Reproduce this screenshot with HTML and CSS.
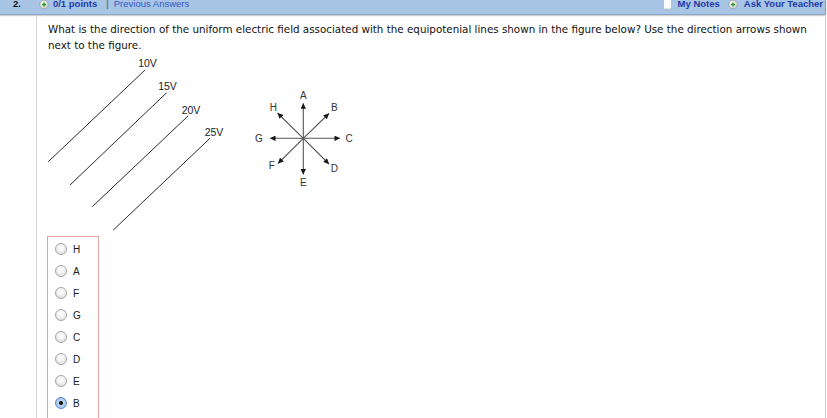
FILE: index.html
```html
<!DOCTYPE html>
<html>
<head>
<meta charset="utf-8">
<link rel="stylesheet" href="styles.css">
</head>
<body>
<div class="header">
  <span class="qnum">2.</span>
  <svg class="plus-icon" width="10" height="10" viewBox="0 0 10 10"><defs><radialGradient id="pg" cx="0.4" cy="0.35" r="0.7"><stop offset="0" stop-color="#ffffff"/><stop offset="1" stop-color="#c9c9c9"/></radialGradient></defs><circle cx="5" cy="4.5" r="4.3" fill="url(#pg)" stroke="#9a9a9a" stroke-width="0.7"/><path d="M5 2.4V6.6M2.9 4.5H7.1" stroke="#2f9a2f" stroke-width="1.5"/></svg>
  <span class="points">0/1 points</span>
  <span class="sep">|</span>
  <span class="prev">Previous Answers</span>
  <span class="spacer"></span>
  <svg class="doc-icon" width="11" height="11" viewBox="0 0 11 11"><path d="M1.5 -2H7L9.5 0.5V10H1.5Z" fill="#fbfbfb" stroke="#b8b8b8" stroke-width="0.8"/></svg>
  <span class="notes">My Notes</span>
  <svg class="plus-icon plus-right" width="10" height="10" viewBox="0 0 10 10"><circle cx="5" cy="4.5" r="4.3" fill="url(#pg)" stroke="#9a9a9a" stroke-width="0.7"/><path d="M5 2.4V6.6M2.9 4.5H7.1" stroke="#2f9a2f" stroke-width="1.5"/></svg>
  <span class="ask">Ask Your Teacher</span>
</div>
<div class="question">
  <p class="qtext">What is the direction of the uniform electric field associated with the equipotenial lines shown in the figure below? Use the direction arrows shown next to the figure.</p>
  <svg class="figure" width="320" height="180" viewBox="0 0 320 180">
    <defs>
      <marker id="ah" viewBox="0 0 10 10" refX="10" refY="5" markerWidth="6.5" markerHeight="5.5" markerUnits="userSpaceOnUse" orient="auto"><path d="M0 0L10 5L0 10Z" fill="#151515"/></marker>
    </defs>
    <g stroke="#2a2a2a" stroke-width="1">
      <line x1="0.3" y1="108.7" x2="97" y2="17"/>
      <line x1="22" y1="132" x2="118.7" y2="39.7"/>
      <line x1="44.3" y1="153.7" x2="140.3" y2="62.7"/>
      <line x1="65.3" y1="177" x2="162" y2="85.3"/>
    </g>
    <g class="vlabel" text-anchor="middle">
      <text x="99.5" y="13.7">10V</text>
      <text x="119.5" y="36.7">15V</text>
      <text x="143" y="60.7">20V</text>
      <text x="166" y="82.7">25V</text>
    </g>
    <g stroke="#555" stroke-width="1.1" marker-end="url(#ah)">
      <line x1="255.3" y1="85.3" x2="255.3" y2="50.3"/>
      <line x1="255.3" y1="85.3" x2="255.3" y2="121.5"/>
      <line x1="255.3" y1="85.3" x2="222" y2="85.3"/>
      <line x1="255.3" y1="85.3" x2="292" y2="85.3"/>
      <line x1="255.3" y1="85.3" x2="229.5" y2="60"/>
      <line x1="255.3" y1="85.3" x2="281" y2="60.5"/>
      <line x1="255.3" y1="85.3" x2="230" y2="110.5"/>
      <line x1="255.3" y1="85.3" x2="281" y2="111"/>
    </g>
    <g class="dlabel" text-anchor="middle">
      <text x="255.3" y="45.6">A</text>
      <text x="255.3" y="133.3">E</text>
      <text x="211" y="88.9">G</text>
      <text x="301" y="88.9">C</text>
      <text x="225.3" y="58.3">H</text>
      <text x="286.3" y="58.3">B</text>
      <text x="223.7" y="116.3">F</text>
      <text x="286.3" y="118.9">D</text>
    </g>
  </svg>
  <div class="options">
    <label class="opt"><input type="radio" name="dir" class="radio"><span>H</span></label>
    <label class="opt"><input type="radio" name="dir" class="radio"><span>A</span></label>
    <label class="opt"><input type="radio" name="dir" class="radio"><span>F</span></label>
    <label class="opt"><input type="radio" name="dir" class="radio"><span>G</span></label>
    <label class="opt"><input type="radio" name="dir" class="radio"><span>C</span></label>
    <label class="opt"><input type="radio" name="dir" class="radio"><span>D</span></label>
    <label class="opt"><input type="radio" name="dir" class="radio"><span>E</span></label>
    <label class="opt"><input type="radio" name="dir" class="radio" checked><span>B</span></label>
  </div>
</div>
</body>
</html>
```

FILE: styles.css
```css
html, body {
  margin: 0;
  padding: 0;
  background: #ffffff;
  overflow: hidden;
}
body {
  width: 827px;
  height: 418px;
}
.header {
  box-sizing: border-box;
  width: 826px;
  height: 15px;
  display: flex;
  align-items: flex-start;
  background: #a9c5e5;
  border-bottom: 1px solid #8ba7c8;
  border-right: 1px solid #7f9bbd;
  box-shadow: 0 1px 1px rgba(0,0,0,0.18);
  font-family: "Liberation Sans", Arial, sans-serif;
  font-size: 9.5px;
  line-height: 8px;
  padding: 0 2px 0 13px;
  color: #1c3aa8;
  white-space: nowrap;
}
.qnum {
  font-weight: bold;
  color: #111;
}
.plus-icon {
  display: block;
  margin-top: -0.5px;
  margin-left: 18px;
  flex: none;
}
.points {
  font-weight: bold;
  margin-left: 4px;
}
.sep {
  color: #555;
  margin-left: 9px;
}
.prev {
  color: #3355c4;
  margin-left: 5px;
}
.spacer {
  flex: 1;
}
.doc-icon {
  display: block;
  flex: none;
  margin-top: -1px;
}
.notes {
  font-weight: bold;
  margin-left: 5px;
}
.plus-right {
  margin-left: 8px;
}
.ask {
  font-weight: bold;
  margin-left: 6px;
}
.question {
  box-sizing: border-box;
  width: 790px;
  height: 402px;
  margin-left: 36px;
  margin-top: 1px;
  border-left: 1px solid #d6d6d6;
  border-right: 1px solid #d0d0d0;
  padding: 6px 10px 0 11px;
}
.qtext {
  margin: 0;
  max-width: 765px;
  font-family: "DejaVu Sans", Verdana, sans-serif;
  font-size: 10.35px;
  line-height: 15.5px;
  color: #111;
}
.figure {
  display: block;
  margin-top: 0;
  overflow: visible;
}
.vlabel, .dlabel {
  font-family: "Liberation Sans", Arial, sans-serif;
  fill: #222;
}
.vlabel {
  font-size: 10.5px;
}
.dlabel {
  font-size: 10px;
  fill: #333;
}
.options {
  width: 52px;
  box-sizing: border-box;
  margin-left: -1px;
  margin-top: 3px;
  border: 1px solid #e7a2a2;
  padding: 1px 0 10px 0;
}
.opt {
  display: flex;
  align-items: center;
  height: 22px;
  font-family: "Liberation Sans", Arial, sans-serif;
  font-size: 10px;
  color: #1a1a1a;
}
.radio {
  -webkit-appearance: none;
  appearance: none;
  box-sizing: border-box;
  width: 12px;
  height: 12px;
  margin: 0 6px 0 7px;
  border-radius: 50%;
  border: 1px solid #a6a6a6;
  background: radial-gradient(circle at 50% 35%, #ffffff 0%, #f2f2f2 45%, #d4d4d4 100%);
}
.radio:checked {
  border-color: #5a86c4;
  background: radial-gradient(circle, #1a1a1a 0, #1a1a1a 1.7px, #bcd6f4 2.3px, #8db6e6 100%);
}
```
